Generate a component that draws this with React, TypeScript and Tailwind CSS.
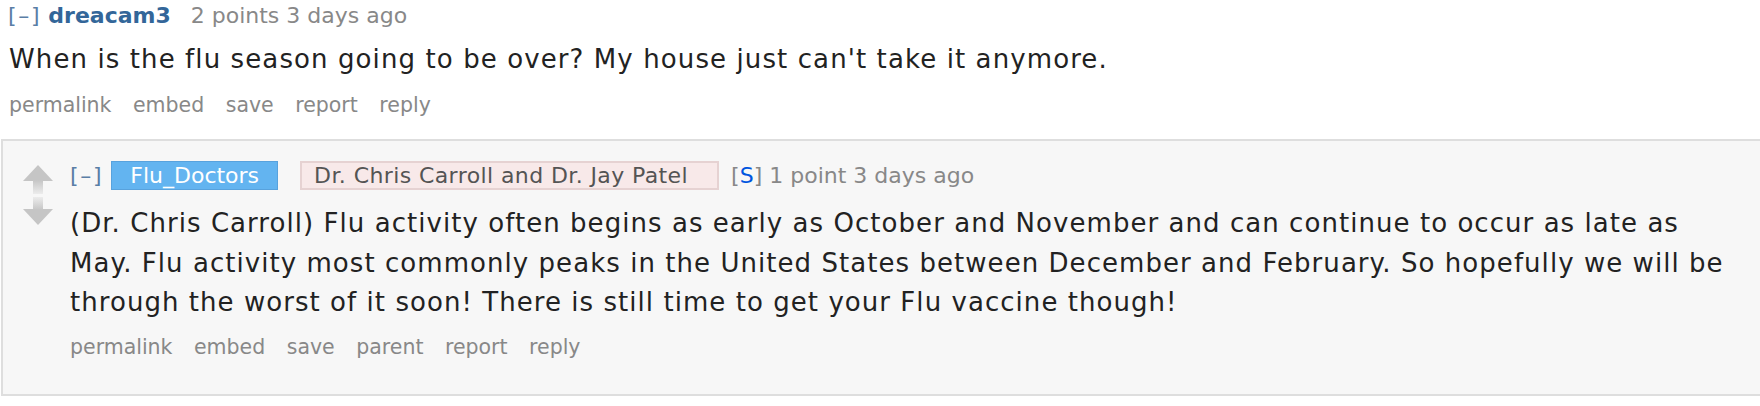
import React from "react";

const UpArrow = () => (
  <svg width="30" height="29" viewBox="0 0 30 29">
    <defs>
      <linearGradient id="upStem" x1="0" y1="0" x2="0" y2="1">
        <stop offset="0" stopColor="#c5c5c5" />
        <stop offset="1" stopColor="#ececec" />
      </linearGradient>
    </defs>
    <path d="M15 0 L30 16 L0 16 Z" fill="#c5c5c5" />
    <rect x="10" y="15" width="10" height="14" fill="url(#upStem)" />
  </svg>
);

const DownArrow = () => (
  <svg width="30" height="28" viewBox="0 0 30 28">
    <defs>
      <linearGradient id="downStem" x1="0" y1="1" x2="0" y2="0">
        <stop offset="0" stopColor="#c5c5c5" />
        <stop offset="1" stopColor="#ececec" />
      </linearGradient>
    </defs>
    <rect x="10" y="0" width="10" height="13" fill="url(#downStem)" />
    <path d="M0 12 L30 12 L15 28 Z" fill="#c5c5c5" />
  </svg>
);

const Buttons = ({ items }: { items: string[] }) => (
  <ul className="flex gap-[21.5px] text-[20.5px] leading-[28px] text-[#888]">
    {items.map((item) => (
      <li key={item}>{item}</li>
    ))}
  </ul>
);

export default function App() {
  return (
    <div className="min-h-[406px] bg-white font-['DejaVu_Sans',Verdana,sans-serif] text-[#222]">
      {/* parent comment */}
      <div className="pl-[8px] pt-[2px]">
        <div className="flex items-baseline text-[22px] leading-[28px]">
          <span className="tracking-[1.7px] text-[#5a7ea6]">[–]</span>
          <span className="ml-[7px] font-bold text-[#369]">dreacam3</span>
          <span className="ml-[20px] text-[#888]">2 points 3 days ago</span>
        </div>
        <p className="mt-[10px] pl-[1px] text-[26px] leading-[39px] tracking-[1.1px]">
          When is the flu season going to be over? My house just can't take it anymore.
        </p>
        <div className="mt-[12px] pl-[1px]">
          <Buttons items={["permalink", "embed", "save", "report", "reply"]} />
        </div>
      </div>

      {/* child comment */}
      <div className="mt-[20px] ml-[1px] flex border-y-2 border-l-2 border-[#dedede] bg-[#f7f7f7] pl-[20px] pt-[20px] pb-[33px]">
        <div className="mt-[4px] flex w-[30px] flex-col items-center gap-[3px]">
          <UpArrow />
          <DownArrow />
        </div>
        <div className="ml-[17px] flex-1">
          <div className="flex items-baseline text-[22px] leading-[28px]">
            <span className="tracking-[1.7px] text-[#5a7ea6]">[–]</span>
            <span className="ml-[8px] border border-[#58a2dd] bg-[#63b4f0] px-[18px] leading-[27px] text-white">
              Flu_Doctors
            </span>
            <span className="ml-[22px] border-2 border-[#e6d2d2] bg-[#f8e9e9] pl-[12px] pr-[29px] leading-[25px] tracking-[0.4px] text-[#545454]">
              Dr. Chris Carroll and Dr. Jay Patel
            </span>
            <span className="ml-[12px] text-[#888]">
              [<span className="text-[#0055df]">S</span>]
            </span>
            <span className="ml-[7px] text-[#888]">1 point 3 days ago</span>
          </div>
          <p className="mt-[14px] text-[26px] leading-[39.5px] tracking-[1.05px]">
            (Dr. Chris Carroll) Flu activity often begins as early as October and November and can continue to occur as late as
            <br />
            May. Flu activity most commonly peaks in the United States between December and February. So hopefully we will be
            <br />
            through the worst of it soon! There is still time to get your Flu vaccine though!
          </p>
          <div className="mt-[10px]">
            <Buttons items={["permalink", "embed", "save", "parent", "report", "reply"]} />
          </div>
        </div>
      </div>
    </div>
  );
}
